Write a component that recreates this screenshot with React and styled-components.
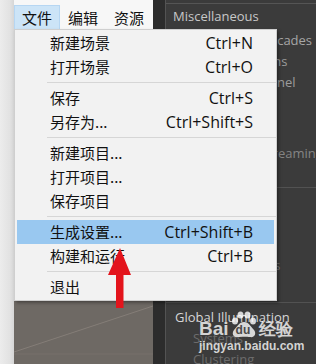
import React from "react";
import styled, { createGlobalStyle } from "styled-components";

const GlobalStyle = createGlobalStyle`
  html, body { margin: 0; padding: 0; }
  body {
    background: #3a3a3a;
    font-family: "Open Sans", "Noto Sans CJK SC", sans-serif;
  }
`;

const Frame = styled.div`
  position: relative;
  width: 316px;
  height: 364px;
  display: flex;
  overflow: hidden;
`;

const LeftStrip = styled.div`
  width: 14px;
  flex: none;
  background: linear-gradient(90deg, #ececec 0%, #e2e2e2 70%, #d6d6d6 100%);
`;

const SceneColumn = styled.div`
  width: 139px;
  flex: none;
  display: flex;
  flex-direction: column;
`;

const MenuBar = styled.div`
  height: 29px;
  padding-top: 5px;
  box-sizing: border-box;
  display: flex;
  background: #f7f7f7;
`;

const MenuTitle = styled.div`
  height: 24px;
  line-height: 24px;
  padding: 0 7px;
  font-family: "Noto Sans CJK SC", sans-serif;
  font-size: 15px;
  color: #111;
  background: ${(p) => (p.$open ? "#cce4f7" : "transparent")};
  box-sizing: border-box;
  border: 1px solid ${(p) => (p.$open ? "#b6d6f2" : "transparent")};
  border-bottom: none;
`;

const SceneView = styled.div`
  flex: 1;
  background: #6e6964;
  position: relative;
`;

const SceneGrid = styled.svg`
  display: block;
  width: 100%;
  height: 100%;
`;

const Gutter = styled.div`
  width: 12px;
  flex: none;
  background: #2c2c2c;
`;

const Inspector = styled.div`
  flex: 1;
  background: #3b3b3b;
  border-left: 1px solid #535353;
  padding-top: 3px;
  min-width: 0;
`;

const InspectorBody = styled.div`
  border-top: 1px solid #555;
  display: flex;
  flex-direction: column;
`;

const PropRow = styled.div`
  height: 21px;
  line-height: 21px;
  margin-top: ${(p) => p.$mt || 0}px;
  padding-left: ${(p) => p.$indent}px;
  font-size: 13px;
  white-space: nowrap;
  color: ${(p) => p.$tone};
`;

const Divider = styled.div`
  height: 1px;
  background: #525252;
  margin-top: ${(p) => p.$mt}px;
`;

const Dropdown = styled.div`
  position: absolute;
  left: 14px;
  top: 29px;
  width: 263px;
  box-sizing: border-box;
  background: #f2f2f2;
  border: 1px solid #cfcfcf;
  box-shadow: 2px 2px 3px rgba(0, 0, 0, 0.35);
  padding: 1px 2px 1px;
`;

const Item = styled.div`
  height: 24px;
  display: flex;
  align-items: center;
  justify-content: space-between;
  padding: 0 21px 0 33px;
  background: ${(p) => (p.$active ? "#99c8f0" : "transparent")};
  color: #111;
`;

const Label = styled.span`
  font-family: "Noto Sans CJK SC", sans-serif;
  font-size: 15px;
  line-height: 24px;
`;

const Shortcut = styled.span`
  font-family: "Open Sans", sans-serif;
  font-size: 16px;
  line-height: 24px;
`;

const Separator = styled.div`
  height: 1px;
  background: #d6d6d6;
  margin: 3px -2px 3px 30px;
`;

const Arrow = styled.svg`
  position: absolute;
  left: 106px;
  top: 246px;
`;

const Watermark = styled.div`
  position: absolute;
  left: 199px;
  top: 311px;
  display: flex;
  flex-direction: column;
  color: rgba(255, 255, 255, 0.78);
  pointer-events: none;
`;

const BrandLine = styled.div`
  display: flex;
  align-items: flex-end;
  height: 28px;
`;

const BrandWord = styled.span`
  font-family: "Liberation Sans", Arial, sans-serif;
  font-weight: bold;
  font-size: ${(p) => p.$size}px;
  line-height: 1;
  margin-bottom: ${(p) => p.$mb || 0}px;
`;

const Paw = styled.div`
  position: relative;
  width: 28px;
  height: 28px;
  margin: 0 1px;
`;

const PawText = styled.span`
  position: absolute;
  left: 6px;
  top: 13px;
  font-family: "Liberation Sans", Arial, sans-serif;
  font-weight: bold;
  font-size: 12px;
  line-height: 1;
  color: #4a4a4a;
`;

const Domain = styled.div`
  font-family: "Liberation Sans", Arial, sans-serif;
  font-weight: bold;
  font-size: 12px;
  line-height: 13px;
  margin-top: 1px;
`;

const menuTitles = ["文件", "编辑", "资源"];

const menu = [
  [
    { label: "新建场景", key: "Ctrl+N" },
    { label: "打开场景", key: "Ctrl+O" },
  ],
  [
    { label: "保存", key: "Ctrl+S" },
    { label: "另存为...", key: "Ctrl+Shift+S" },
  ],
  [
    { label: "新建项目..." },
    { label: "打开项目..." },
    { label: "保存项目" },
  ],
  [
    { label: "生成设置...", key: "Ctrl+Shift+B", active: true },
    { label: "构建和运行", key: "Ctrl+B" },
  ],
  [{ label: "退出" }],
];

export default function App() {
  return (
    <>
      <GlobalStyle />
      <Frame>
        <LeftStrip />
        <SceneColumn>
          <MenuBar>
            {menuTitles.map((t, i) => (
              <MenuTitle key={t} $open={i === 0}>
                {t}
              </MenuTitle>
            ))}
          </MenuBar>
          <SceneView>
            <SceneGrid viewBox="0 0 139 335" preserveAspectRatio="none">
              <line x1="0" y1="323" x2="139" y2="277" stroke="#8a837c" strokeWidth="0.8" />
              <line x1="0" y1="325" x2="139" y2="325" stroke="#7d7771" strokeWidth="0.6" />
              <line x1="0" y1="274" x2="139" y2="274" stroke="#79736d" strokeWidth="0.6" />
            </SceneGrid>
          </SceneView>
        </SceneColumn>
        <Gutter />
        <Inspector>
          <InspectorBody>
            <PropRow $mt={2} $indent={7} $tone="#c8c8c8">Miscellaneous</PropRow>
            <PropRow $mt={3} $indent={38} $tone="#a6a6a6">Shadow Cascades</PropRow>
            <PropRow $indent={22} $tone="#9c9c9c">Shadow Options</PropRow>
            <PropRow $indent={28} $tone="#9c9c9c">Shadow Channel</PropRow>
            <PropRow $mt={50} $indent={45} $tone="#858585">Texture Streaming</PropRow>
            <Divider $mt={23} />
            <PropRow $mt={67} $indent={26} $tone="#767676">Async Uploads</PropRow>
            <Divider $mt={26} />
            <PropRow $mt={4} $indent={9} $tone="#d6d6d6">Global Illumination</PropRow>
            <PropRow $indent={27} $tone="#6c6c6c">Systems</PropRow>
            <PropRow $indent={27} $tone="#6c6c6c">Clustering</PropRow>
          </InspectorBody>
        </Inspector>

        <Dropdown>
          {menu.map((group, gi) => (
            <React.Fragment key={gi}>
              {gi > 0 && <Separator />}
              {group.map((it) => (
                <Item key={it.label} $active={it.active}>
                  <Label>{it.label}</Label>
                  {it.key && <Shortcut>{it.key}</Shortcut>}
                </Item>
              ))}
            </React.Fragment>
          ))}
        </Dropdown>

        <Arrow width="28" height="64" viewBox="0 0 28 64">
          <polygon points="14,2 25,29 17.5,29 17.5,62 10,62 10,29 2,29" fill="#e3141c" />
        </Arrow>

        <Watermark>
          <BrandLine>
            <BrandWord $size={19} $mb={1}>Bai</BrandWord>
            <Paw>
              <svg width="28" height="28" viewBox="0 0 28 28">
                <g fill="rgba(255,255,255,0.8)">
                  <ellipse cx="5" cy="10" rx="3" ry="3.6" />
                  <ellipse cx="10.5" cy="4" rx="3" ry="3.6" />
                  <ellipse cx="17.5" cy="4" rx="3" ry="3.6" />
                  <ellipse cx="23" cy="10" rx="3" ry="3.6" />
                  <path d="M14 11 C9 11 7 16 4 19 C1 23 4 27 8 26 C11 25.5 17 25.5 20 26 C24 27 27 23 24 19 C21 16 19 11 14 11 Z" />
                </g>
              </svg>
              <PawText>du</PawText>
            </Paw>
            <BrandWord $size={17} $mb={1}>经验</BrandWord>
          </BrandLine>
          <Domain>jingyan.baidu.com</Domain>
        </Watermark>
      </Frame>
    </>
  );
}
